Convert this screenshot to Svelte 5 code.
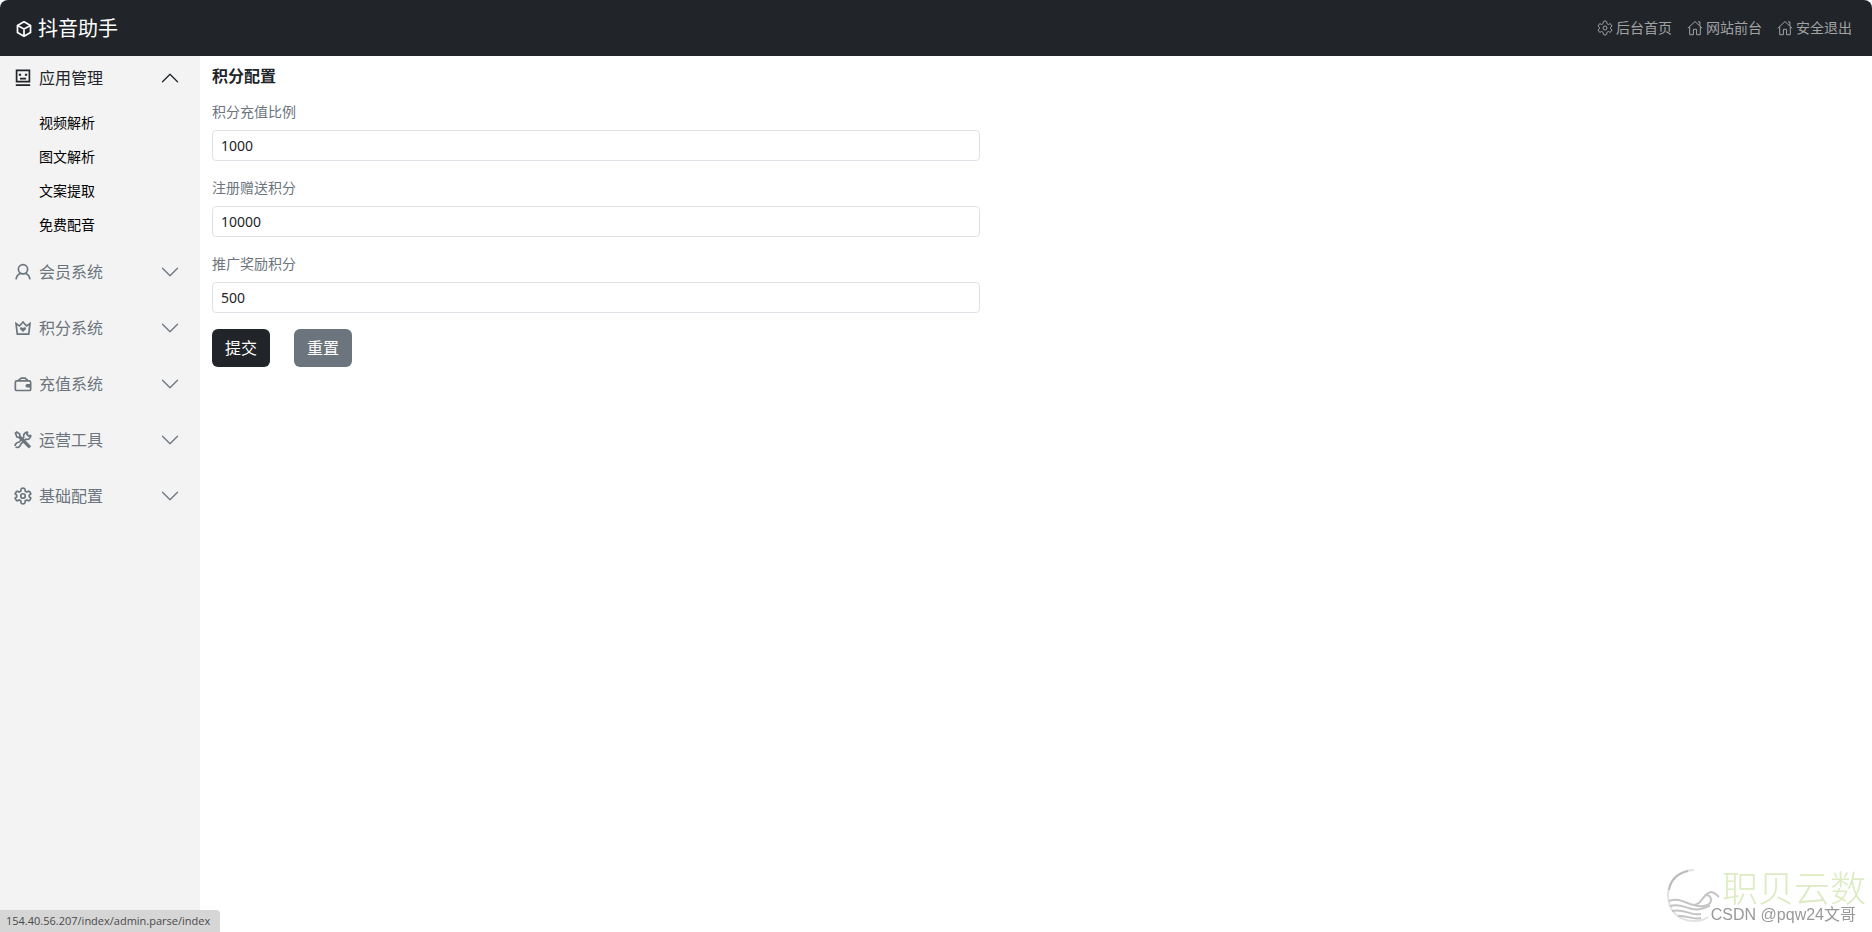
<script lang="ts">
  interface Group {
    name: string
    icon: string
    open: boolean
    links: string[]
  }

  let groups = $state<Group[]>([
    { name: '应用管理', icon: 'app', open: true, links: ['视频解析', '图文解析', '文案提取', '免费配音'] },
    { name: '会员系统', icon: 'user', open: false, links: [] },
    { name: '积分系统', icon: 'crown', open: false, links: [] },
    { name: '充值系统', icon: 'wallet', open: false, links: [] },
    { name: '运营工具', icon: 'tools', open: false, links: [] },
    { name: '基础配置', icon: 'gear', open: false, links: [] }
  ])

  const topLinks = [
    { name: '后台首页', icon: 'gear' },
    { name: '网站前台', icon: 'home' },
    { name: '安全退出', icon: 'home' }
  ]

  const fields = [
    { id: 'ratio', label: '积分充值比例', value: '1000' },
    { id: 'register', label: '注册赠送积分', value: '10000' },
    { id: 'promote', label: '推广奖励积分', value: '500' }
  ]
</script>

{#snippet icon(name: string)}
  <svg class="icon" viewBox="0 0 16 16" aria-hidden="true">
    {#if name === 'box'}
      <path d="M8 1.5 13.8 4.8V11.2L8 14.500 2.200 11.200V4.800ZM2.500 5 8 8l5.500-3M8 8v6" />
    {:else if name === 'app'}
      <path d="M2.3 1.3h11.4v10H2.3ZM1.6 14.3h12.8M5.3 8.5h5.4" />
      <path d="M5.3 4.2v1.9M10.7 4.2v1.9" stroke-width="2" />
    {:else if name === 'user'}
      <circle cx="8" cy="5.6" r="4.1" />
      <path d="M1.8 14.6c.3-2.7 1.600-4.400 3.800-5.300M14.200 14.600c-.3-2.700-1.600-4.400-3.800-5.300" />
    {:else if name === 'crown'}
      <path d="M1.8 4 2.9 13.5h10.2L14.2 4l-3.1 2.2L8 2.6 4.9 6.2Z" />
      <path class="solid" d="M8 11.6 5.3 8.9c-.5-1.6 1.7-2.1 2.7-.8 1-1.3 3.2-.8 2.7.8Z" />
    {:else if name === 'wallet'}
      <rect x="1.2" y="5.2" width="13.6" height="8.6" rx="1.2" />
      <path d="M3.3 5.2 6.5 2.800h3.400l2.700 2.400" />
      <path class="solid" d="M15 8h-3.2a1.6 1.6 0 0 0 0 3.2H15Z" />
    {:else if name === 'tools'}
      <path d="M1.3 2 2.5 1 5 2.7l.3 1.9 8.9 8.9-1 1-8.9-8.9-1.7-.3Z" />
      <path d="M14.9 3.600a3.400 3.400 0 0 1-4.500 3.700L6 11.700a3.200 3.200 0 0 1-4.600 2.600M12.400 1.100a3.400 3.400 0 0 0-3.700 4.500L4.300 10A3.200 3.200 0 0 0 1 13.300M14.900 3.600l-1.800 1-1.700-1.700 1-1.800" />
    {:else if name === 'gear'}
      <circle cx="8" cy="8" r="2" />
      <path d="M6 3.7 6.3 1.9Q6.5 1 8 1T9.700 1.900L10 3.700 11.400 4.500 13 3.700Q14.200 4 15 6L13.600 7.200V8.800L15 10Q14.200 12 13 12.300L11.400 11.500 10 12.300 9.700 14.100Q9.500 15 8 15T6.300 14.100L6 12.300 4.600 11.500 3 12.300Q1.800 12 1 10L2.400 8.800V7.200L1 6Q1.800 4 3 3.700L4.600 4.500Z" stroke-linejoin="round" />
    {:else}
      <path d="M.8 8.3 8 1.5l7.2 6.8M2.700 6.700v8h3.700V9.300h3.200v5.400h3.700v-8M11 1.900h1.900v4" />
    {/if}
  </svg>
{/snippet}

<div class="page">
  <header>
    <a class="brand" href="#home">{@render icon('box')}抖音助手</a>
    <nav class="top">
      {#each topLinks as link}
        <a href="#{link.name}">{@render icon(link.icon)}{link.name}</a>
      {/each}
    </nav>
  </header>

  <div class="body">
    <aside>
      {#each groups as group}
        <section class:open={group.open}>
          <button type="button" class="group" aria-expanded={group.open} onclick={() => (group.open = !group.open)}>
            {@render icon(group.icon)}
            <span>{group.name}</span>
            <svg class="chevron" viewBox="0 0 16 16" aria-hidden="true"><path d="m2 5 6 6 6-6" /></svg>
          </button>
          {#if group.open}
            <ul>
              {#each group.links as link}
                <li><a href="#{link}">{link}</a></li>
              {/each}
            </ul>
          {/if}
        </section>
      {/each}
    </aside>

    <main>
      <h1>积分配置</h1>
      <form onsubmit={(e) => e.preventDefault()}>
        {#each fields as field}
          <label for={field.id}>{field.label}</label>
          <input id={field.id} type="text" value={field.value} />
        {/each}
        <div class="actions">
          <button type="submit" class="btn">提交</button>
          <button type="reset" class="btn secondary">重置</button>
        </div>
      </form>
    </main>
  </div>

  <div class="status">154.40.56.207/index/admin.parse/index</div>

  <div class="mark">
    <svg viewBox="0 0 54 56" aria-hidden="true">
      <path d="M28 2C12 2 2 13 2 27c0 15 10 26 26 26 6 0 10-1 14-4" stroke="#e2e2e2" />
      <path d="M22 3C13 5 5 11 3 22" stroke="#bbb" />
      <path d="M3 33c11-4 17 3 25 4 8 0 9-12 17-13 4 0 5 3 8 5M28 37c9 3 17 0 17-5 0-3-2-5-5-5M4 38c13-4 19 6 31 3 4-1 7-3 9-3M6 43c12-3 18 5 29 3M12 48c8-1 14 4 23 2" stroke="#c4c4c4" />
    </svg>
    <span class="company">职贝云数</span>
    <span class="credit">CSDN @pqw24文哥</span>
  </div>
</div>

<style>
  :global(body) {
    margin: 0;
    background: #fff;
    color: #212529;
    font-family: "Noto Sans", "Noto Sans CJK SC", sans-serif;
  }

  .page {
    min-height: 100vh;
    display: flex;
    flex-direction: column;
  }

  a {
    color: inherit;
    text-decoration: none;
  }

  button,
  input {
    font-family: inherit;
    box-sizing: border-box;
  }

  .icon {
    flex: none;
    width: 18px;
    height: 18px;
    fill: none;
    stroke: currentColor;
    stroke-width: 1.5;
  }

  .icon .solid {
    fill: currentColor;
    stroke: none;
  }

  header {
    display: flex;
    align-items: center;
    justify-content: space-between;
    height: 56px;
    padding: 0 20px 0 15px;
    background: #212529;
    border-radius: 8px 8px 0 0;
  }

  .brand {
    display: flex;
    align-items: center;
    gap: 5px;
    padding-top: 2px;
    color: #fff;
    font-size: 20px;
    line-height: 30px;
  }

  .top {
    display: flex;
    gap: 15px;
    color: #a0a2a4;
    font-size: 14px;
    line-height: 20px;
  }

  .top a {
    display: flex;
    align-items: center;
    gap: 3px;
  }

  .top .icon {
    width: 16px;
    height: 16px;
    stroke-width: 1;
  }

  .body {
    flex: 1;
    display: flex;
  }

  aside {
    flex: none;
    width: 200px;
    background: #f3f3f3;
  }

  section {
    margin-bottom: 12px;
  }

  section.open {
    margin-bottom: 8px;
  }

  .group {
    display: flex;
    align-items: center;
    gap: 7px;
    width: 100%;
    height: 44px;
    padding: 0 20px 0 14px;
    border: 0;
    background: none;
    color: #6c757d;
    font-size: 16px;
    line-height: 24px;
    text-align: left;
    cursor: pointer;
  }

  .open .group {
    color: #212529;
  }

  .group span {
    flex: 1;
  }

  .chevron {
    width: 20px;
    height: 20px;
    fill: none;
    stroke: currentColor;
    stroke-linecap: round;
    stroke-linejoin: round;
  }

  .open .chevron {
    transform: rotate(180deg);
  }

  ul {
    margin: 0;
    padding: 6px 0 0 39px;
    list-style: none;
    color: #000;
    font-size: 14px;
    line-height: 34px;
  }

  main {
    flex: 1;
    padding: 8px 12px;
  }

  h1 {
    margin: 0 0 13px;
    font-size: 16px;
    line-height: 24px;
    font-weight: 700;
  }

  form {
    max-width: 768px;
  }

  label {
    display: block;
    margin-bottom: 8px;
    color: #6c757d;
    font-size: 14px;
    line-height: 21px;
  }

  input {
    display: block;
    width: 100%;
    height: 31px;
    margin-bottom: 16px;
    padding: 0 8px;
    border: 1px solid #dee2e6;
    border-radius: 4px;
    background: #fff;
    color: #212529;
    font-size: 14px;
  }

  .actions {
    display: flex;
    gap: 24px;
  }

  .btn {
    height: 38px;
    padding: 0 13px;
    border: 0;
    border-radius: 6px;
    background: #212529;
    color: #fff;
    font-size: 16px;
    line-height: 24px;
  }

  .secondary {
    background: #6c757d;
  }

  .status {
    position: fixed;
    left: 0;
    bottom: 0;
    padding: 0 10px 0 6px;
    border-top-right-radius: 4px;
    background: #d6d6d6;
    color: #4a4a4a;
    font-family: "Open Sans", sans-serif;
    font-size: 11px;
    line-height: 22px;
  }

  .mark {
    position: fixed;
    right: 6px;
    bottom: 4px;
    width: 200px;
    height: 60px;
  }

  .mark svg {
    width: 54px;
    height: 56px;
    fill: none;
    stroke-width: 2;
  }

  .company,
  .credit {
    position: absolute;
    right: 0;
    white-space: nowrap;
  }

  .company {
    top: 0;
    color: #dcebc2;
    font-family: "Noto Sans CJK SC", sans-serif;
    font-size: 36px;
    line-height: 36px;
    font-weight: 300;
  }

  .credit {
    right: 10px;
    bottom: 3px;
    color: #999;
    font-family: "Liberation Sans", "Noto Sans CJK SC", sans-serif;
    font-size: 16px;
    line-height: 20px;
  }
</style>
